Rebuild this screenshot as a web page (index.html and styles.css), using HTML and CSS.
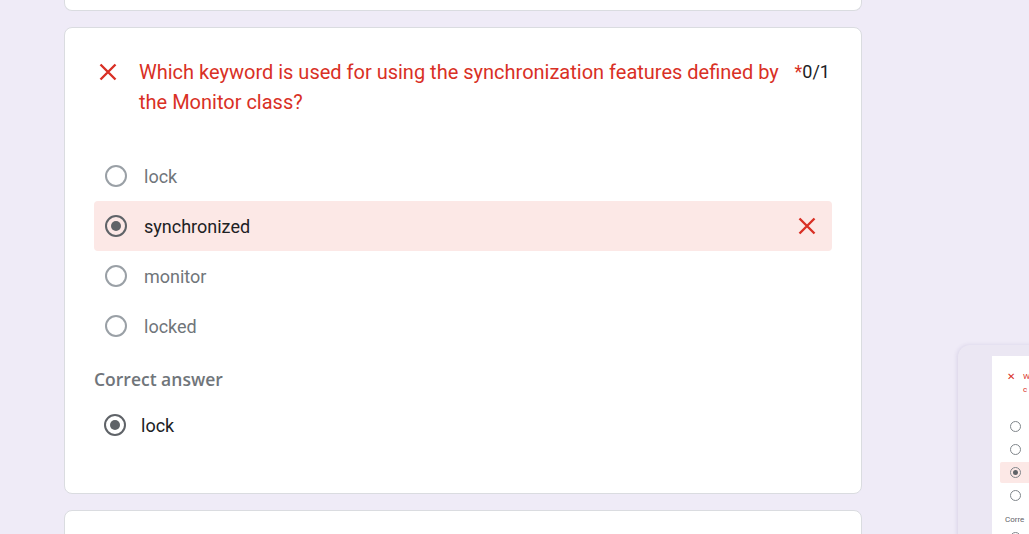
FILE: index.html
```html
<!DOCTYPE html>
<html>
<head>
<meta charset="utf-8">
<link rel="stylesheet" href="styles.css">
</head>
<body>
<main class="column">
  <div class="card card-prev"></div>
  <section class="card card-q">
    <div class="q-head">
      <svg class="x-icon" viewBox="0 0 18 18" width="18" height="18"><path d="M1.5 1.5 16.5 16.5M16.5 1.5 1.5 16.5" stroke="#d93025" stroke-width="2.4" fill="none"/></svg>
      <div class="q-title">Which keyword is used for using the synchronization features defined by the Monitor class?</div>
      <div class="q-score"><span class="req">*</span>0/1</div>
    </div>
    <ul class="options">
      <li class="opt"><span class="radio"></span><span class="opt-text">lock</span></li>
      <li class="opt opt-wrong"><span class="radio radio-on"></span><span class="opt-text opt-sel">synchronized</span>
        <svg class="wrong-icon" viewBox="0 0 18 18" width="18" height="18"><path d="M1.5 1.5 16.5 16.5M16.5 1.5 1.5 16.5" stroke="#d93025" stroke-width="2.4" fill="none"/></svg>
      </li>
      <li class="opt"><span class="radio"></span><span class="opt-text">monitor</span></li>
      <li class="opt"><span class="radio"></span><span class="opt-text">locked</span></li>
    </ul>
    <div class="correct-label">Correct answer</div>
    <div class="opt opt-correct"><span class="radio radio-on"></span><span class="opt-text opt-sel">lock</span></div>
  </section>
  <div class="card card-next"></div>
</main>

<aside class="thumb">
  <div class="thumb-card">
    <div class="t-head"><span class="t-x">✕</span><span class="t-title">W<br>c</span></div>
    <div class="t-opt"><span class="t-radio"></span></div>
    <div class="t-opt"><span class="t-radio"></span></div>
    <div class="t-opt t-wrong"><span class="t-radio t-on"></span></div>
    <div class="t-opt"><span class="t-radio"></span></div>
    <div class="t-label">Corre</div>
    <div class="t-opt"><span class="t-radio t-on"></span></div>
  </div>
</aside>
</body>
</html>
```
FILE: styles.css
```css
html, body {
  margin: 0;
  padding: 0;
  height: 100%;
  overflow: hidden;
}
body {
  background: #efebf7;
  font-family: Roboto, "Liberation Sans", Arial, sans-serif;
  position: relative;
}
.column {
  width: 798px;
  margin-left: 64px;
  display: flex;
  flex-direction: column;
  gap: 16px;
}
.card {
  background: #fff;
  border: 1px solid #dadce0;
  border-radius: 8px;
  box-sizing: border-box;
}
.card-prev {
  height: 11px;
  border-top: none;
  border-radius: 0 0 8px 8px;
}
.card-next {
  height: 40px;
}
.card-q {
  padding: 29px 29px 43px 29px;
}
.q-head {
  display: flex;
  align-items: flex-start;
  padding-left: 5px;
}
.x-icon {
  flex: none;
  margin-top: 6px;
  margin-right: 22px;
}
.q-title {
  flex: 1;
  color: #d93025;
  font-size: 20px;
  line-height: 30px;
  padding-right: 12px;
}
.q-score {
  flex: none;
  color: #202124;
  font-size: 18px;
  line-height: 30px;
  padding-right: 2px;
}
.req {
  color: #d93025;
}
.options {
  list-style: none;
  margin: 34px 0 0 0;
  padding: 0;
}
.opt {
  height: 50px;
  display: flex;
  align-items: center;
  padding-left: 11px;
  border-radius: 4px;
}
.opt-wrong {
  background: #fce8e6;
  padding-right: 16px;
}
.radio {
  width: 22px;
  height: 22px;
  box-sizing: border-box;
  border: 2px solid #9aa0a6;
  border-radius: 50%;
  flex: none;
  display: flex;
  align-items: center;
  justify-content: center;
}
.radio-on {
  border-color: #5f6368;
}
.radio-on::after {
  content: "";
  width: 10px;
  height: 10px;
  border-radius: 50%;
  background: #5f6368;
}
.opt-text {
  margin-left: 17px;
  font-size: 18px;
  color: #70757a;
}
.opt-sel {
  color: #202124;
}
.wrong-icon {
  margin-left: auto;
}
.correct-label {
  margin-top: 16px;
  font-family: "Open Sans", Roboto, sans-serif;
  font-size: 17.5px;
  line-height: 24px;
  font-weight: 600;
  color: #70757a;
}
.opt-correct {
  margin-top: 9px;
  padding-left: 10px;
}
.opt-correct .opt-text {
  margin-left: 15px;
}

/* floating thumbnail preview */
.thumb {
  position: absolute;
  left: 958px;
  top: 345px;
  width: 120px;
  height: 220px;
  background: #ebe7f3;
  border-radius: 12px 0 0 0;
  box-shadow: -1px 0 4px rgba(60, 40, 120, 0.12);
  padding: 11px 0 0 34px;
  box-sizing: border-box;
}
.thumb-card {
  background: #fff;
  height: 100%;
  padding: 14px 0 0 14px;
  box-sizing: border-box;
  font-family: Roboto, "Liberation Sans", sans-serif;
}
.t-head {
  display: flex;
  gap: 8px;
  font-size: 8px;
  line-height: 13px;
  color: #d93025;
  margin-left: 1px;
}
.t-x {
  font-size: 10px;
}
.t-title {
  font-size: 8px;
  line-height: 13px;
}
.t-opt {
  height: 23px;
  display: flex;
  align-items: center;
  margin-left: -14px;
  padding-left: 18px;
}
.t-head + .t-opt {
  margin-top: 19px;
}
.t-wrong {
  background: #fce8e6;
  margin-left: -6px;
  padding-left: 10px;
  border-radius: 2px;
  height: 21px;
  margin-top: 1px;
  margin-bottom: 1px;
}
.t-radio {
  width: 11px;
  height: 11px;
  box-sizing: border-box;
  border: 1px solid #80868b;
  border-radius: 50%;
  display: flex;
  align-items: center;
  justify-content: center;
}
.t-on::after {
  content: "";
  width: 5px;
  height: 5px;
  border-radius: 50%;
  background: #5f6368;
}
.t-label {
  font-size: 8px;
  line-height: 12px;
  color: #5f6368;
  margin-top: 7px;
  margin-left: -1px;
  white-space: nowrap;
}
```
